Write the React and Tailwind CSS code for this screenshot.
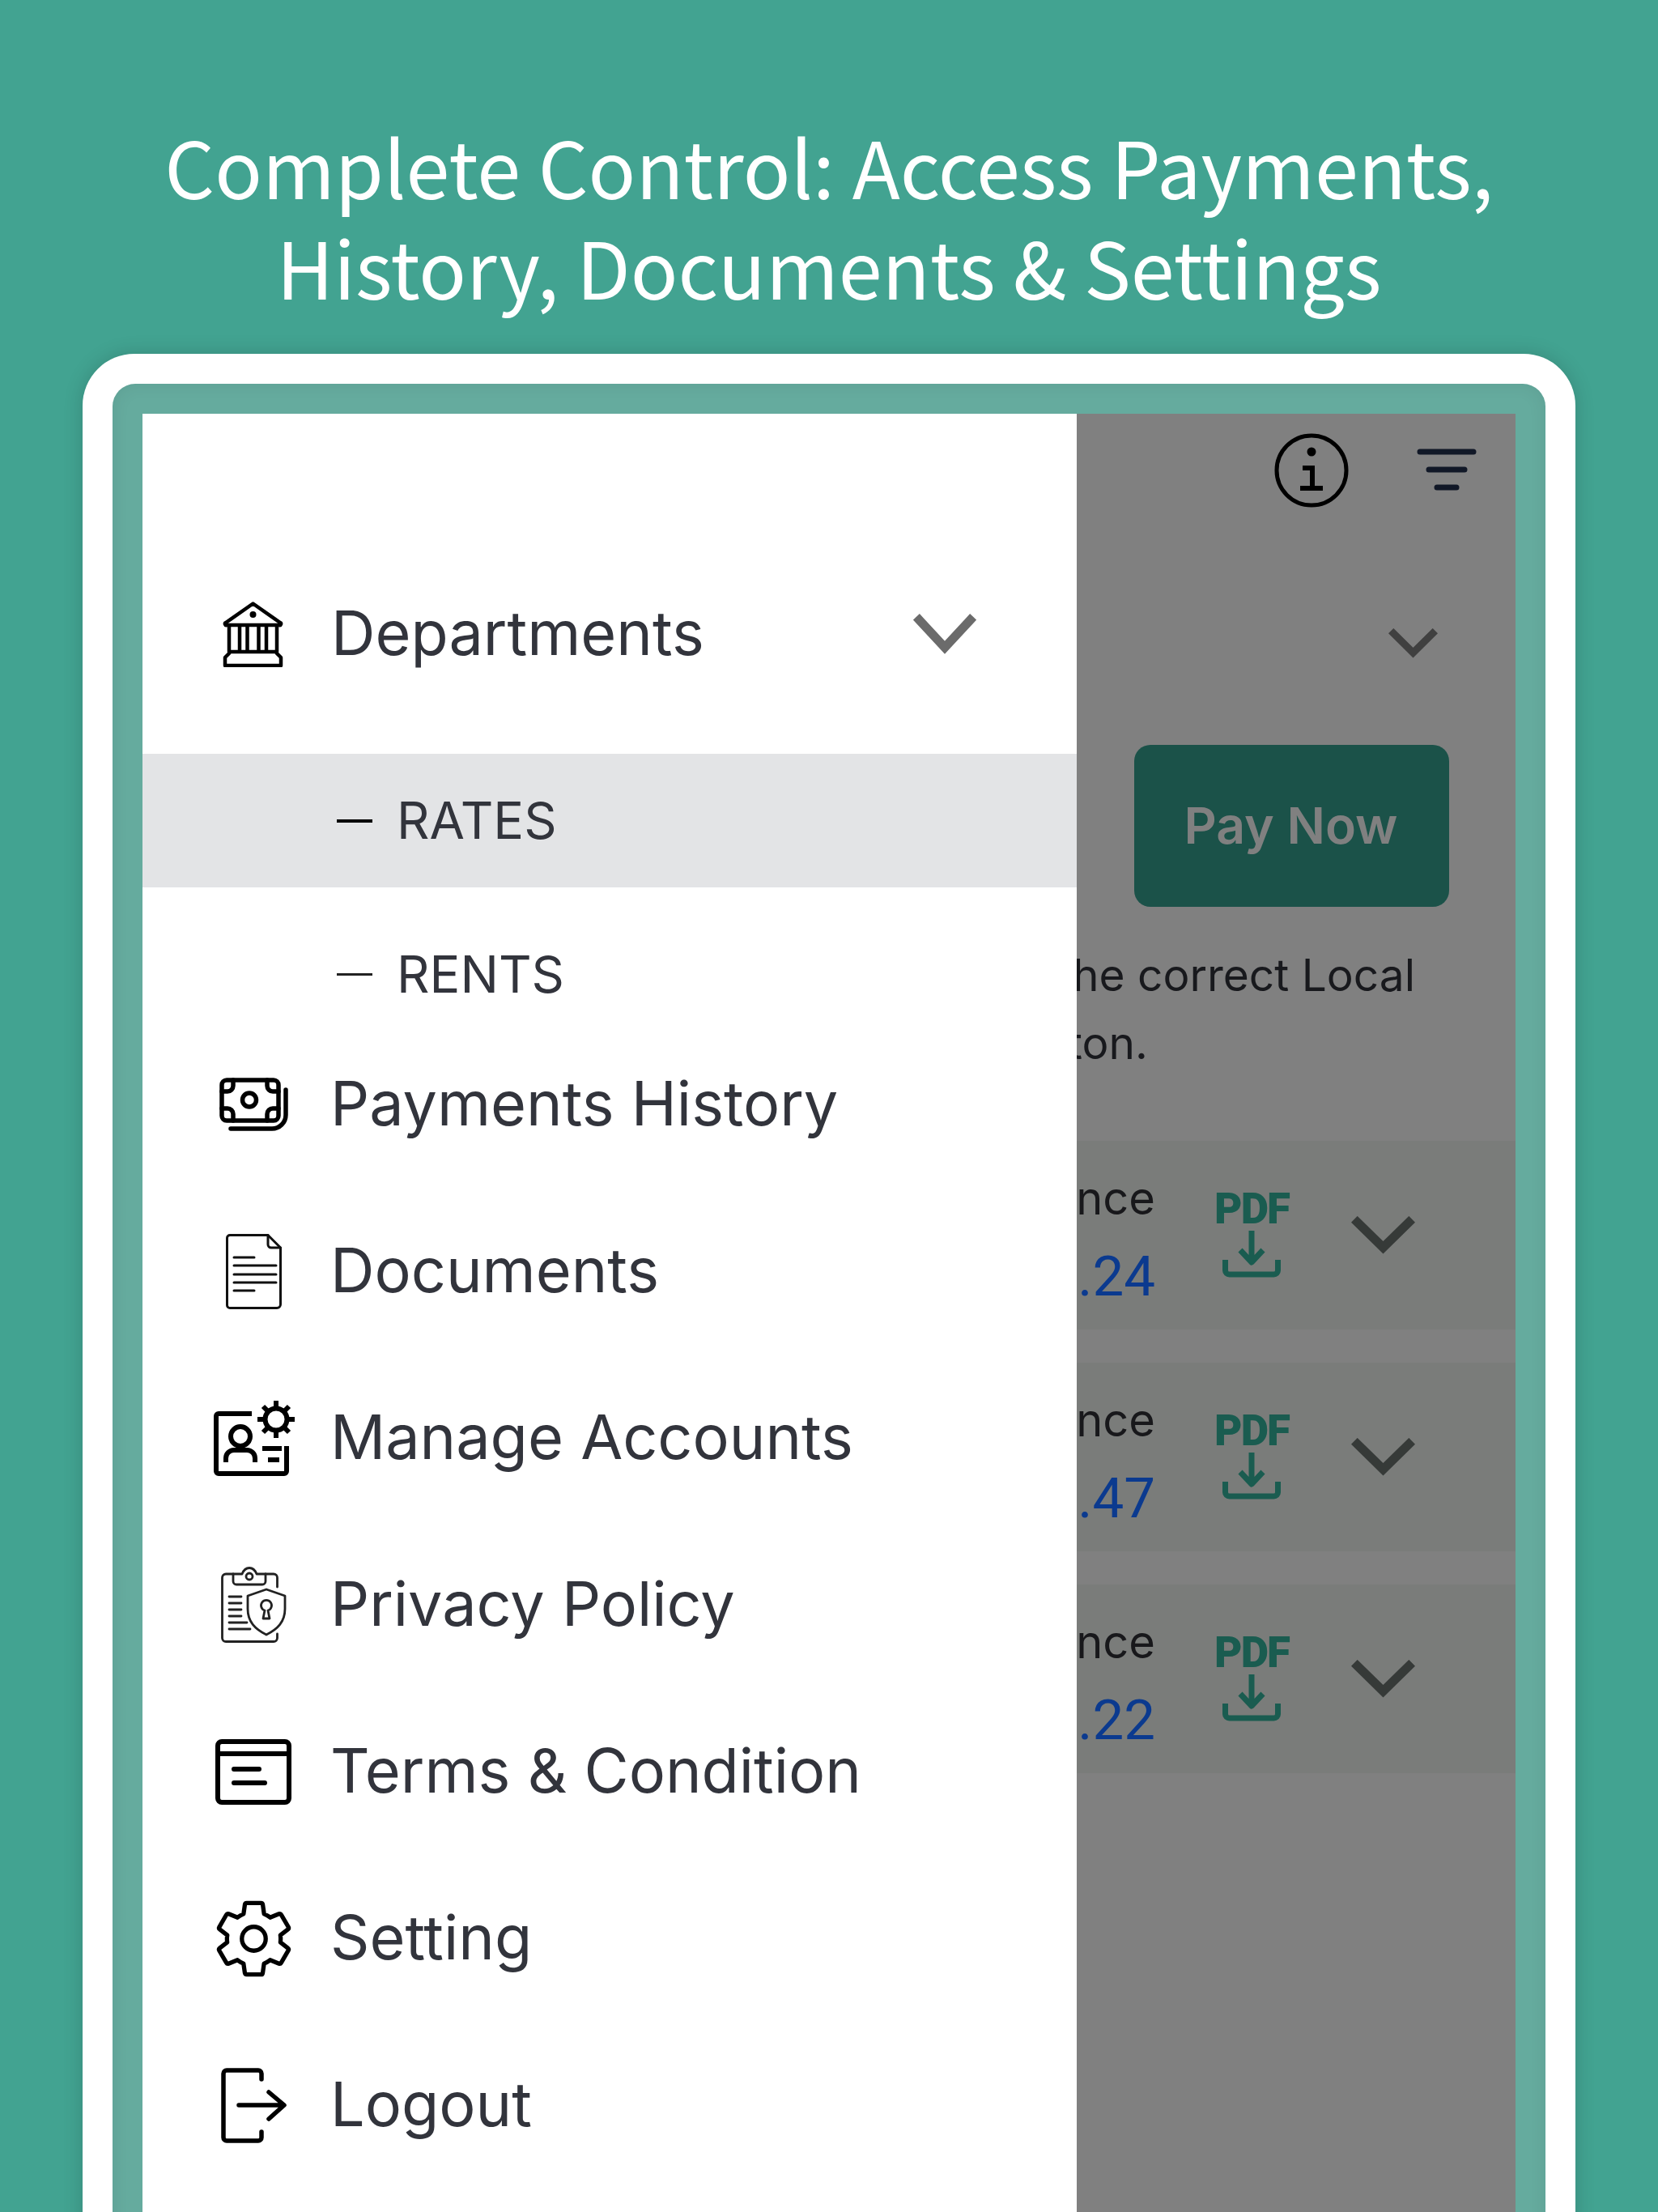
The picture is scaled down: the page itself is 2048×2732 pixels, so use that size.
import React from 'react';

const Chevron = ({ className, color, width, height, stroke }) => (
  <svg viewBox={`0 0 ${width} ${height}`} className={className} fill="none" stroke={color} strokeWidth={stroke} strokeLinejoin="miter">
    <path d={`M${stroke * 0.35} ${stroke * 0.35} L${width / 2} ${height - stroke * 0.75} L${width - stroke * 0.35} ${stroke * 0.35}`} />
  </svg>
);

const BankIcon = () => (
  <svg viewBox="0 0 75 81" className="w-[75px] h-[81px]" fill="none" stroke="#000" strokeWidth="4.500" strokeLinejoin="round" strokeLinecap="round">
    <path d="M37.500 2.500 L71 26 a1.500 1.500 0 0 1 -1 3 H5 a1.500 1.500 0 0 1 -1 -3 Z" />
    <circle cx="37.500" cy="16" r="4" fill="#000" stroke="none" />
    <path d="M8 30 V62 M21 30 V62 M30.500 30 V62 M44.500 30 V62 M54 30 V62 M67 30 V62 M8 62 H67" />
    <path d="M8 64 L3 69 V79 H72 V69 L67 64" />
  </svg>
);

const MoneyIcon = () => (
  <svg viewBox="0 0 85 66" className="w-[85px] h-[66px]" fill="none" stroke="#000" strokeWidth="5.500" strokeLinecap="round" strokeLinejoin="round">
    <rect x="3" y="3" width="70" height="50" rx="6" />
    <circle cx="37" cy="27.500" r="8.500" />
    <path d="M3 17 H10 a7 7 0 0 0 7 -7 V3 M59 3 V10 a7 7 0 0 0 7 7 H73 M3 38 H10 a7 7 0 0 1 7 7 V53 M59 53 V45 a7 7 0 0 1 7 -7 H73" />
    <path d="M82 15 V46 a17 17 0 0 1 -17 17 H14" />
  </svg>
);

const DocIcon = () => (
  <svg viewBox="0 0 69 93" className="w-[69px] h-[93px]" fill="none" stroke="#111" strokeWidth="3" strokeLinejoin="round" strokeLinecap="round">
    <path d="M5 1.500 H52 L67.500 17 V87 a4.500 4.500 0 0 1 -4.500 4.500 H5 a3.500 3.500 0 0 1 -3.500 -3.500 V5 a3.500 3.500 0 0 1 3.500 -3.500 Z" />
    <path d="M52 1.500 V13 a4 4 0 0 0 4 4 H67.500" />
    <path d="M10 29 H35 M10 39 H62 M10 50 H62 M10 60 H62 M10 70 H35" />
  </svg>
);

const ManageIcon = () => (
  <svg viewBox="0 0 101 94" className="w-[101px] h-[94px] ml-[3px]" fill="none" stroke="#000" strokeWidth="6" strokeLinejoin="round">
    <path d="M47 17 H6 a3 3 0 0 0 -3 3 V88 a3 3 0 0 0 3 3 H87 a3 3 0 0 0 3 -3 V57" />
    <circle cx="33" cy="45" r="12" />
    <path d="M15 77 V72 a10 10 0 0 1 10 -10 H41 a10 10 0 0 1 10 10 V77" />
    <path d="M60 60 H84 M67 74 H81" />
    <circle cx="77" cy="24" r="13.500" />
    <path d="M77 1 V10 M77 38 V47 M54 24 H63 M91 24 H100 M61 8 L67 14 M87 34 L93 40 M61 40 L67 34 M87 14 L93 8" />
  </svg>
);

const PrivacyIcon = () => (
  <svg viewBox="0 0 81 94" className="w-[81px] h-[94px]" fill="none" stroke="#222" strokeWidth="2.800" strokeLinejoin="round" strokeLinecap="round">
    <path d="M15 9 H6 a4.500 4.500 0 0 0 -4.500 4.500 V88 a4.500 4.500 0 0 0 4.500 4.500 H65 a4.500 4.500 0 0 0 4.500 -4.500 V83 M69.500 25 V13.500 A4.500 4.500 0 0 0 65 9 H55" />
    <path d="M15 9 V18 a4 4 0 0 0 4 4 H51 a4 4 0 0 0 4 -4 V9 H44 C42 4 39 1.500 35 1.500 C31 1.500 28 4 26 9 Z" />
    <circle cx="35" cy="12" r="4" />
    <path d="M10 37 H25 M10 45 H25 M10 53 H25 M10 61 H25 M10 69 H32 M10 77 H36" />
    <path d="M56 28 L79 36 V52 C79 68 70 77 56 84 C42 77 33 68 33 52 V36 Z" />
    <path d="M52 64 L54 54 a6.500 6.500 0 1 1 4 0 L60 64 Z" />
  </svg>
);

const TermsIcon = () => (
  <svg viewBox="0 0 94 81" className="w-[94px] h-[81px]" fill="none" stroke="#000" strokeWidth="6" strokeLinejoin="round">
    <rect x="3" y="3" width="88" height="75" rx="5" />
    <path d="M3 18 H91" />
    <path strokeLinecap="round" d="M23 37 H54 M23 54 H61" />
  </svg>
);

const GearIcon = () => (
  <svg viewBox="1.900 1.500 20.200 21" className="w-[93px] h-[97px]" fill="none" stroke="#000" strokeWidth="1.150" strokeLinejoin="round">
    <path d="M19.140 12.940c.04-.3.06-.61.06-.94 0-.32-.02-.64-.07-.94l2.030-1.580c.18-.14.23-.41.12-.61l-1.920-3.320c-.12-.22-.37-.29-.59-.22l-2.390.96c-.5-.38-1.030-.7-1.620-.94l-.36-2.540c-.04-.24-.24-.41-.48-.41h-3.840c-.24 0-.43.17-.47.41l-.36 2.540c-.59.24-1.130.57-1.620.94l-2.390-.96c-.22-.08-.47 0-.59.22L2.740 8.870c-.12.21-.08.47.12.61l2.030 1.580c-.05.3-.09.63-.09.94s.02.64.07.94l-2.030 1.580c-.18.14-.23.41-.12.61l1.920 3.320c.12.22.37.29.59.22l2.390-.96c.5.38 1.030.7 1.620.94l.36 2.540c.05.24.24.41.48.41h3.840c.24 0 .44-.17.47-.41l.36-2.540c.59-.24 1.130-.56 1.620-.94l2.390.96c.22.08.47 0 .59-.22l1.920-3.320c.12-.22.07-.47-.12-.61l-2.010-1.580z" />
    <circle cx="12" cy="12" r="3.200" />
  </svg>
);

const LogoutIcon = () => (
  <svg viewBox="0 0 81 93" className="w-[81px] h-[93px]" fill="none" stroke="#000" strokeWidth="5.500" strokeLinecap="round" strokeLinejoin="round">
    <path d="M50 14 V7 a4 4 0 0 0 -4 -4 H7 a4 4 0 0 0 -4 4 V86 a4 4 0 0 0 4 4 H46 a4 4 0 0 0 4 -4 V79" />
    <path d="M22 46 H77 M59 30 L78 46 L59 63" />
  </svg>
);

const InfoIcon = () => (
  <svg viewBox="0 0 92 92" className="w-[92px] h-[92px]" fill="none" stroke="#000" strokeWidth="5">
    <circle cx="46" cy="46" r="43" />
    <circle cx="46" cy="23" r="5.500" fill="#000" stroke="none" />
    <path strokeWidth="6" d="M35 43 H47 V68 M32 68 H60" />
  </svg>
);

const FilterIcon = () => (
  <svg viewBox="0 0 74 52" className="w-[74px] h-[52px]" fill="none" stroke="#111827" strokeWidth="7" strokeLinecap="round">
    <path d="M4 4 H70 M15 26 H59 M25 48 H49" />
  </svg>
);

const PdfIcon = () => (
  <div className="flex flex-col items-center w-[90px]">
    <span className="font-['Roboto',sans-serif] font-black text-[53px] leading-[38px] tracking-[-2px] text-[#1a5c50]">PDF</span>
    <svg viewBox="0 0 74 60" className="w-[74px] h-[60px] mt-[6px]" fill="none" stroke="#1a5c50" strokeWidth="7" strokeLinejoin="round">
      <path d="M37 2 V40 M23 26 L37 41 L51 26" />
      <path d="M4.500 38 V51 a5 5 0 0 0 5 5 H64.500 a5 5 0 0 0 5 -5 V38" />
    </svg>
  </div>
);

const menuItems = [
  { label: 'Payments History', icon: <MoneyIcon /> },
  { label: 'Documents', icon: <DocIcon /> },
  { label: 'Manage Accounts', icon: <ManageIcon /> },
  { label: 'Privacy Policy', icon: <PrivacyIcon /> },
  { label: 'Terms & Condition', icon: <TermsIcon /> },
  { label: 'Setting', icon: <GearIcon /> },
  { label: 'Logout', icon: <LogoutIcon /> },
];

const balances = ['.24', '.47', '.22'];

const BalanceRow = ({ cents }) => (
  <div className="h-[233px] bg-[#7a7c7a] flex items-center">
    <div className="w-[97px] pt-[10px] flex flex-col items-end font-['Inter',sans-serif]">
      <span className="text-[56px] leading-[70px] text-[#18181b]">nce</span>
      <span className="text-[69px] leading-[80px] mt-[22px] text-[#0b3a8f] font-['Roboto',sans-serif]">{cents}</span>
    </div>
    <div className="ml-[74px]">
      <PdfIcon />
    </div>
    <Chevron className="ml-[78px] w-[79px] h-[47px]" color="#363a38" width={79} height={47} stroke={11} />
  </div>
);

export default function App() {
  return (
    <div className="w-[2048px] h-[2732px] overflow-hidden bg-[#42a391] flex flex-col items-center">
      <h1 className="mt-[142px] w-full text-center text-white font-['Noto_Sans_CJK_SC',sans-serif] text-[97px] leading-[124px] font-normal">
        Complete Control: Access Payments,<br />History, Documents &amp; Settings
      </h1>

      <div className="mt-[47px] w-[1844px] h-[2400px] shrink-0 bg-white rounded-t-[64px] p-[37px] pb-0 shadow-[0_0_24px_rgba(0,0,0,0.16)]">
        <div className="h-full bg-[#65ab9e] rounded-t-[28px] p-[37px] pb-0 shadow-[inset_0_0_22px_rgba(0,0,0,0.07)]">
          <div className="flex h-full">
            {/* Drawer */}
            <div className="w-[1154px] bg-white font-['Inter',sans-serif] text-[#32343c]">
              <div className="h-[420px] pl-[99px] pr-[124px] flex items-center pt-[124px]">
                <div className="w-[134px]"><BankIcon /></div>
                <span className="text-[75.500px] flex-1 pb-[3px]">Departments</span>
                <Chevron className="w-[78px] h-[50px]" color="#6b6b6b" width={78} height={50} stroke={11} />
              </div>
              <div className="h-[165px] bg-[#e3e4e6] flex items-center pl-[240px]">
                <span className="w-[44px] h-[4px] bg-black" />
                <span className="ml-[30px] text-[63px]">RATES</span>
              </div>
              <div className="h-[165px] pt-[71px] flex items-start pl-[240px]">
                <span className="w-[44px] h-[3px] bg-[#222] mt-[35px]" />
                <span className="ml-[30px] text-[63px] leading-[72px]">RENTS</span>
              </div>
              {menuItems.map((item) => (
                <div key={item.label} className="h-[206px] flex items-center">
                  <div className="w-[274px] flex justify-center">{item.icon}</div>
                  <span className="ml-[-42px] text-[75.500px] pb-[3px]">{item.label}</span>
                </div>
              ))}
            </div>

            {/* Dimmed page behind the drawer */}
            <div className="flex-1 min-w-0 bg-[#808080] overflow-hidden font-['Inter',sans-serif]">
              <div className="h-[80px] pt-[24px] flex justify-end items-start pr-[48px] gap-[84px]">
                <InfoIcon />
                <div className="mt-[19px]"><FilterIcon /></div>
              </div>
              <div className="h-[329px] flex justify-end items-start pr-[96px] pt-[185px]">
                <Chevron className="w-[61px] h-[37px]" color="#404040" width={61} height={37} stroke={9} />
              </div>
              <div className="ml-[71px] w-[389px] h-[200px] bg-[#1b5249] rounded-[20px] flex items-center justify-center pr-[2px]">
                <span className="text-[62.500px] font-semibold text-[#808080]">Pay Now</span>
              </div>
              <div className="mt-[42px] -ml-[23px] text-[55px] leading-[84px] text-[#18191d] whitespace-nowrap">
                <p>the correct Local</p>
                <p className="ml-[12px]">ton.</p>
              </div>
              <div className="mt-[79px] flex flex-col gap-[41px]">
                {balances.map((cents) => (
                  <BalanceRow key={cents} cents={cents} />
                ))}
              </div>
            </div>
          </div>
        </div>
      </div>
    </div>
  );
}
